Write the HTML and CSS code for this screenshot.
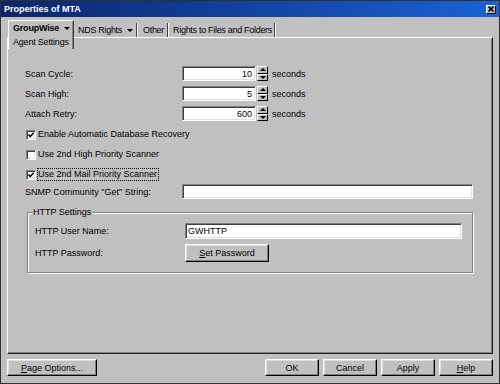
FILE: index.html
```html
<!DOCTYPE html>
<html lang="en">
<head>
    <meta charset="UTF-8">
    <title>Properties of MTA</title>
    <link rel="stylesheet" href="styles.css">
</head>
<body>
    <div class="window">
        <!-- 标题栏 -->
        <div class="titlebar">
            <span class="title">Properties of MTA</span>
            <span class="close">
                <svg width="6" height="6" viewBox="0 0 6 6"><path d="M0.5 0.5 L5.5 5.5 M5.5 0.5 L0.5 5.5" stroke="#000" stroke-width="1.6"/></svg>
            </span>
        </div>
        <div class="content">
            <!-- 选项卡 -->
            <div class="tabs">
                <div class="tab_active">
                    <div class="tab_main">GroupWise <i class="arrow"></i></div>
                    <div class="tab_sub">Agent Settings</div>
                </div>
                <div class="tab tab_nds">NDS Rights <i class="arrow"></i></div>
                <div class="tab tab_other">Other</div>
                <div class="tab tab_rights">Rights to Files and Folders</div>
            </div>
            <!-- 面板 -->
            <div class="panel">
                <div class="field">
                    <label>Scan Cycle:</label>
                    <input class="num" type="text" value="10">
                    <span class="spin"><b><i class="up"></i></b><b><i class="down"></i></b></span>
                    <span class="unit">seconds</span>
                </div>
                <div class="field">
                    <label>Scan High:</label>
                    <input class="num" type="text" value="5">
                    <span class="spin"><b><i class="up"></i></b><b><i class="down"></i></b></span>
                    <span class="unit">seconds</span>
                </div>
                <div class="field">
                    <label>Attach Retry:</label>
                    <input class="num" type="text" value="600">
                    <span class="spin"><b><i class="up"></i></b><b><i class="down"></i></b></span>
                    <span class="unit">seconds</span>
                </div>
                <div class="check">
                    <span class="box"><svg width="6" height="6" viewBox="0 0 6 6"><path d="M0.3 2.6 L2.2 4.6 L5.7 0.8" stroke="#000" stroke-width="1.5" fill="none"/></svg></span>
                    <span class="check_text">Enable Automatic Database Recovery</span>
                </div>
                <div class="check">
                    <span class="box"></span>
                    <span class="check_text">Use 2nd High Priority Scanner</span>
                </div>
                <div class="check check_last">
                    <span class="box"><svg width="6" height="6" viewBox="0 0 6 6"><path d="M0.3 2.6 L2.2 4.6 L5.7 0.8" stroke="#000" stroke-width="1.5" fill="none"/></svg></span>
                    <span class="check_text focus">Use 2nd Mail Priority Scanner</span>
                </div>
                <div class="field">
                    <label>SNMP Community "Get" String:</label>
                    <input class="wide" type="text" value="">
                </div>
                <!-- HTTP 设置 -->
                <div class="group">
                    <span class="group_title">HTTP Settings</span>
                    <div class="group_row">
                        <label>HTTP User Name:</label>
                        <input class="wide user" type="text" value="GWHTTP">
                    </div>
                    <div class="group_row row_pass">
                        <label>HTTP Password:</label>
                        <div class="btn btn_pass"><u>S</u>et Password</div>
                    </div>
                </div>
            </div>
            <!-- 底部按钮 -->
            <div class="footer">
                <div class="btn btn_page"><u>P</u>age Options...</div>
                <div class="btn_group">
                    <div class="btn">OK</div>
                    <div class="btn">Cancel</div>
                    <div class="btn">Apply</div>
                    <div class="btn"><u>H</u>elp</div>
                </div>
            </div>
        </div>
    </div>
</body>
</html>
```

FILE: styles.css
```css
*{
    padding: 0;
    margin: 0;
    box-sizing: border-box;
}
body{
    font-family: "Liberation Sans", Arial, sans-serif;
    font-size: 9px;
    color: #000;
    background-color: #c0c0c0;
}
.window{
    width: 500px;
    height: 384px;
    background-color: #c0c0c0;
    border: 1px solid #303030;
}
.titlebar{
    height: 16px;
    display: flex;
    align-items: center;
    justify-content: space-between;
    padding: 0 3px 0 3px;
    background: linear-gradient(to right, #0a246a, #1a62d6);
    color: #fff;
}
.title{
    font-weight: bold;
    font-size: 9px;
}
.close{
    width: 10px;
    height: 9px;
    display: flex;
    align-items: center;
    justify-content: center;
    background-color: #c0c0c0;
    border: 1px solid;
    border-color: #fff #000 #000 #fff;
}
.content{
    padding: 3px 6px 0 6px;
}
/* 选项卡 */
.tabs{
    display: flex;
    height: 17px;
    margin-left: 1px;
    white-space: nowrap;
}
.tab_active{
    position: relative;
    z-index: 1;
    width: 66px;
    height: 29px;
    margin-bottom: -12px;
    background-color: #c0c0c0;
    border-top: 1px solid #fff;
    border-left: 1px solid #fff;
    border-right: 1px solid #404040;
    box-shadow: inset -1px 0 #808080;
    padding-left: 4px;
}
.tab_main{
    height: 15px;
    line-height: 15px;
    font-weight: bold;
    letter-spacing: -0.2px;
    display: flex;
    align-items: center;
}
.tab_sub{
    height: 13px;
    line-height: 12px;
    letter-spacing: -0.2px;
}
.arrow{
    display: inline-block;
    width: 0;
    height: 0;
    border-left: 3px solid transparent;
    border-right: 3px solid transparent;
    border-top: 3px solid #000;
    margin-left: 5px;
}
.tab{
    height: 14px;
    margin-top: 3px;
    line-height: 12px;
    letter-spacing: -0.3px;
    border-right: 1px solid #404040;
    box-shadow: 1px 0 #fff;
    margin-right: 1px;
    display: flex;
    align-items: center;
}
.tab_nds{
    padding: 0 3px 0 3px;
    margin-left: 1px;
}
.tab_nds .arrow{
    margin-left: 5px;
}
.tab_other{
    padding: 0 3px 0 5px;
}
.tab_rights{
    padding: 0 2px 0 4px;
}
/* 面板 */
.panel{
    height: 317px;
    border: 1px solid;
    border-color: #fff #202020 #202020 #fff;
    box-shadow: inset -1px -1px #808080;
    padding: 28px 19px 0 17px;
}
.field{
    display: flex;
    align-items: center;
    height: 15px;
    margin-bottom: 5px;
}
.field label{
    width: 157px;
    flex-shrink: 0;
}
input{
    height: 15px;
    font-family: "Liberation Sans", Arial, sans-serif;
    font-size: 9px;
    color: #000;
    background-color: #fff;
    border: 1px solid;
    border-color: #808080 #fff #fff #808080;
    box-shadow: inset 1px 1px #404040, inset -1px -1px #dfdfdf;
    outline: none;
}
.num{
    width: 74px;
    text-align: right;
    padding-right: 3px;
}
.wide{
    flex: 1;
    padding-left: 2px;
}
.spin{
    width: 11px;
    height: 15px;
    margin-left: 1px;
    display: flex;
    flex-direction: column;
}
.spin b{
    flex: 1;
    display: flex;
    align-items: center;
    justify-content: center;
    background-color: #c0c0c0;
    border: 1px solid;
    border-color: #fff #000 #000 #fff;
}
.spin i{
    width: 0;
    height: 0;
    border-left: 3px solid transparent;
    border-right: 3px solid transparent;
}
.spin .up{
    border-bottom: 3px solid #000;
}
.spin .down{
    border-top: 3px solid #000;
}
.unit{
    margin-left: 4px;
}
.check{
    display: flex;
    align-items: center;
    height: 17px;
    margin-bottom: 3px;
}
.check_last{
    margin-bottom: 1px;
}
.box{
    width: 10px;
    height: 10px;
    margin-left: 1px;
    margin-right: 1px;
    background-color: #fff;
    border: 1px solid;
    border-color: #808080 #fff #fff #808080;
    box-shadow: inset 1px 1px #404040, inset -1px -1px #dfdfdf;
    display: flex;
    align-items: center;
    justify-content: center;
}
.check_text{
    border: 1px solid transparent;
    padding: 0 1px 0 0;
    line-height: 11px;
}
.focus{
    border: 1px dotted #000;
}
/* HTTP 设置 */
.group{
    position: relative;
    margin: 13px 0 0 2px;
    border: 1px solid #808080;
    box-shadow: 1px 1px #fff, inset 1px 1px #fff;
    padding: 10px 10px 10px 7px;
}
.group_title{
    position: absolute;
    left: 4px;
    top: -6px;
    padding: 0 1px;
    background-color: #c0c0c0;
    line-height: 11px;
}
.group_row{
    display: flex;
    align-items: center;
    height: 16px;
}
.group_row label{
    width: 150px;
    flex-shrink: 0;
}
.user{
    height: 16px;
}
.row_pass{
    height: 18px;
    margin-top: 5px;
}
/* 按钮 */
.btn{
    height: 17px;
    width: 54px;
    display: flex;
    align-items: center;
    justify-content: center;
    background-color: #c0c0c0;
    border: 1px solid;
    border-color: #fff #000 #000 #fff;
    box-shadow: inset -1px -1px #808080, inset 1px 1px #dfdfdf;
}
.btn_pass{
    width: 84px;
    height: 18px;
}
.footer{
    display: flex;
    justify-content: space-between;
    margin-top: 5px;
}
.btn_page{
    width: 90px;
}
.btn_group{
    display: flex;
    gap: 4px;
}
```
